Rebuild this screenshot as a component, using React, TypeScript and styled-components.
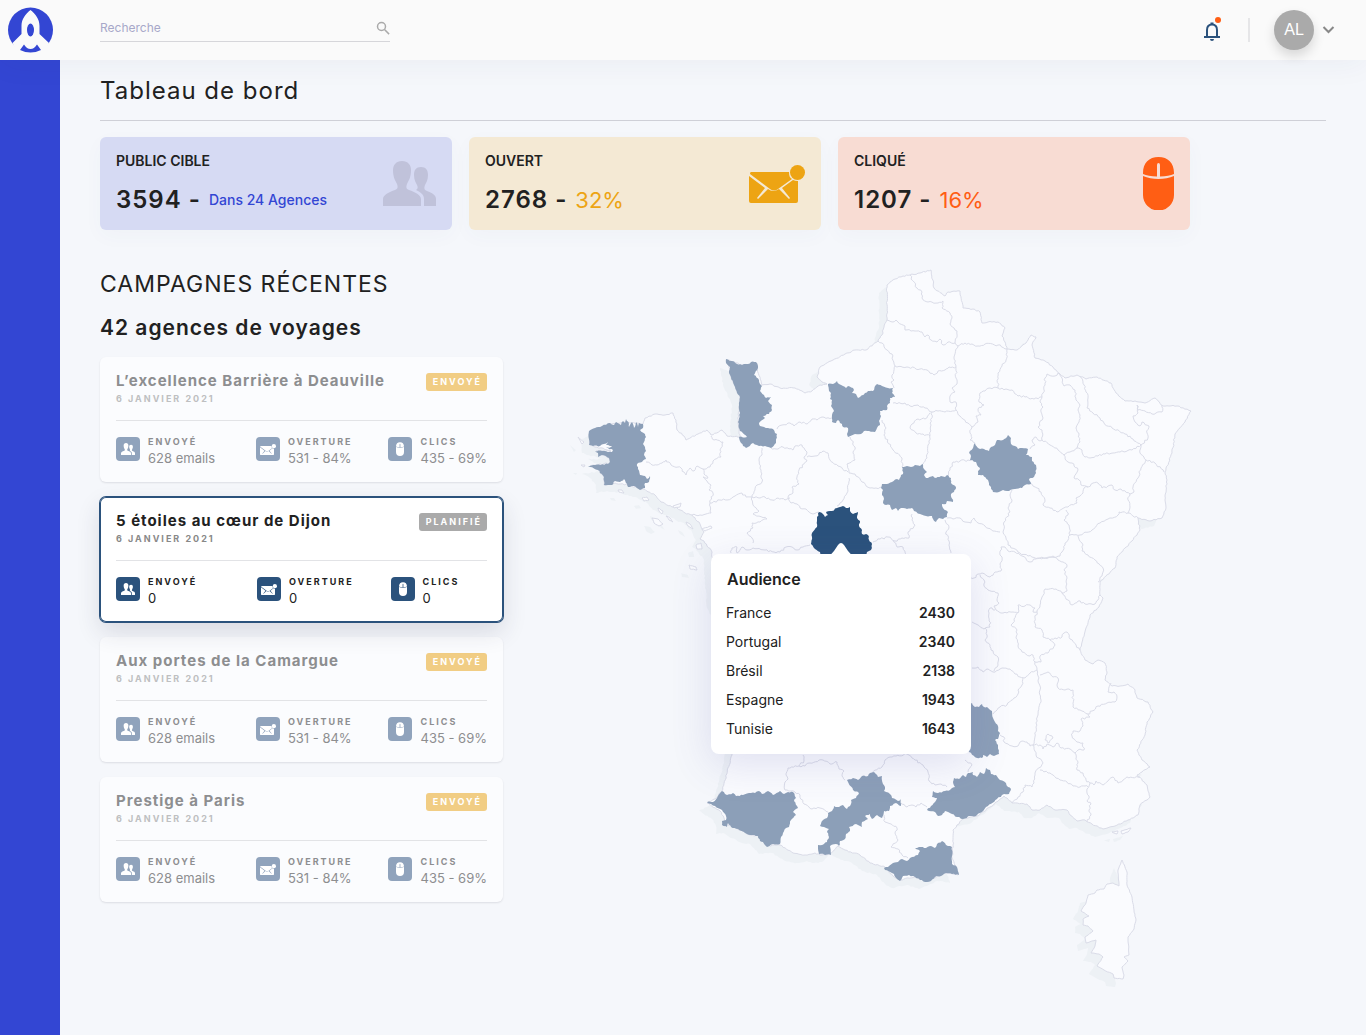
import React from "react";
import styled, { createGlobalStyle } from "styled-components";

const GlobalStyle = createGlobalStyle`
  *, *::before, *::after { box-sizing: border-box; }
  body {
    margin: 0;
    background: #f5f7fb;
    color: #212121;
    font-family: Inter, Roboto, "Liberation Sans", sans-serif;
  }
  h1, h2, h3, p, ul, dl, dd { margin: 0; padding: 0; }
`;

/* ---------- Shell ---------- */

const Shell = styled.div`
  display: grid;
  grid-template-columns: 60px minmax(0, 1fr);
  grid-template-rows: 60px auto;
  min-height: 100vh;
`;

const Header = styled.header`
  grid-column: 1 / -1;
  display: flex;
  align-items: center;
  padding: 0 31px 0 8px;
  background: #fafafa;
  box-shadow: 0 4px 30px rgba(40, 60, 90, 0.05);
  z-index: 1;
`;

const LogoLink = styled.a`
  display: block;
  width: 46px;
  height: 46px;
`;

const Search = styled.label`
  display: flex;
  align-items: center;
  width: 290px;
  height: 28px;
  margin-left: 46px;
  margin-bottom: 4px;
  border-bottom: 1px solid #d6d6da;
`;

const SearchInput = styled.input`
  flex: 1;
  min-width: 0;
  padding: 0;
  border: 0;
  outline: 0;
  background: transparent;
  font: inherit;
  font-size: 12px;
  color: #212121;
  &::placeholder { color: #a7a8c9; opacity: 1; }
`;

const HeaderTools = styled.div`
  display: flex;
  align-items: center;
  margin-left: auto;
`;

const IconButton = styled.button`
  display: flex;
  align-items: center;
  padding: 0;
  border: 0;
  background: none;
  cursor: pointer;
`;

const Separator = styled.span`
  width: 2px;
  height: 24px;
  margin: 0 24px 0 27px;
  background: #e6e6e8;
`;

const Avatar = styled.span`
  display: grid;
  place-items: center;
  width: 40px;
  height: 40px;
  margin-right: 8px;
  border-radius: 50%;
  background: #aaaaaa;
  color: #ffffff;
  font-size: 16px;
  box-shadow: 0 6px 12px rgba(0, 0, 0, 0.14);
`;

const Sidebar = styled.nav`
  background: #3346d3;
`;

const Main = styled.main`
  padding: 0 40px 32px;
`;

const PageTitle = styled.h1`
  padding: 15px 0 13px;
  border-bottom: 1px solid #cfd0d7;
  font-size: 24px;
  line-height: 32px;
  font-weight: 400;
  letter-spacing: 1px;
`;

/* ---------- Key figures ---------- */

const Figures = styled.section`
  display: grid;
  grid-template-columns: repeat(3, minmax(0, 1fr));
  gap: 17px;
  max-width: 1090px;
  margin-top: 16px;
`;

const Figure = styled.article<{ $bg: string }>`
  display: flex;
  align-items: center;
  justify-content: space-between;
  height: 93px;
  padding: 0 16px;
  border-radius: 6px;
  background: ${(p) => p.$bg};
  box-shadow: 0 6px 20px rgba(60, 80, 130, 0.03);
`;

const FigureLabel = styled.h2`
  margin-top: 1px;
  font-size: 14px;
  line-height: 16px;
  font-weight: 600;
`;

const FigureLine = styled.p`
  display: flex;
  align-items: center;
  gap: 8px;
  margin-top: 15px;
  line-height: 32px;
`;

const FigureValue = styled.span`
  font-size: 24px;
  font-weight: 600;
  letter-spacing: 1px;
`;

const FigureNote = styled.span<{ $color: string; $small?: boolean }>`
  color: ${(p) => p.$color};
  font-size: ${(p) => (p.$small ? 14 : 22)}px;
  font-weight: ${(p) => (p.$small ? 500 : 400)};
`;

/* ---------- Campaigns ---------- */

const Content = styled.div`
  display: flex;
  align-items: flex-start;
  justify-content: flex-start;
  gap: 57px;
  padding-top: 30px;
`;

const Campaigns = styled.section`
  flex: 0 0 403px;
  padding-top: 8px;
`;

const SectionTitle = styled.h2`
  font-size: 23px;
  line-height: 32px;
  font-weight: 400;
  letter-spacing: 1px;
`;

const SectionSubtitle = styled.h3`
  margin-top: 12px;
  font-size: 21px;
  line-height: 32px;
  font-weight: 600;
  letter-spacing: 1px;
`;

const CampaignList = styled.ul`
  display: grid;
  gap: 15px;
  margin-top: 13px;
  list-style: none;
`;

const Card = styled.li<{ $active?: boolean }>`
  position: relative;
  z-index: ${(p) => (p.$active ? 1 : 0)};
  height: 125px;
  padding: 16px;
  border-radius: 6px;
  background: ${(p) => (p.$active ? "#ffffff" : "#fbfcfe")};
  box-shadow: ${(p) =>
    p.$active
      ? "inset 0 0 0 1px #2b527c, 0 0 0 1px #2b527c, 0 10px 24px rgba(40, 45, 70, 0.14)"
      : "0 1px 2px rgba(40, 45, 60, 0.12)"};
`;

const CardHead = styled.div`
  display: flex;
  align-items: flex-start;
  justify-content: space-between;
  height: 48px;
  border-bottom: 1px solid #e2e3e6;
`;

const CardTitle = styled.h4<{ $active?: boolean }>`
  margin: 0;
  font-size: 15px;
  line-height: 16px;
  font-weight: 700;
  letter-spacing: 1px;
  color: ${(p) => (p.$active ? "#212121" : "#8d8e90")};
`;

const CardDate = styled.p<{ $active?: boolean }>`
  margin-top: 4px;
  font-size: 9px;
  line-height: 12px;
  font-weight: 700;
  letter-spacing: 2px;
  color: ${(p) => (p.$active ? "#888888" : "#bebfc1")};
`;

const Tag = styled.span<{ $active?: boolean }>`
  padding: 0 5px 0 7px;
  border-radius: 3px;
  background: ${(p) => (p.$active ? "#aaaaaa" : "#f1cd84")};
  color: #ffffff;
  font-size: 9px;
  line-height: 18px;
  font-weight: 700;
  letter-spacing: 2px;
`;

const Stats = styled.dl`
  display: grid;
  grid-template-columns: 38fr 36fr 26fr;
  margin-top: 15px;
`;

const Stat = styled.div<{ $active?: boolean }>`
  display: grid;
  grid-template-columns: 24px auto;
  grid-template-rows: 12px 20px;
  column-gap: 8px;
  white-space: nowrap;
  color: ${(p) => (p.$active ? "#212121" : "#8d8e90")};
`;

const StatIcon = styled.dd<{ $active?: boolean }>`
  grid-row: 1 / 3;
  display: grid;
  place-items: center;
  width: 24px;
  height: 24px;
  margin-top: 1px;
  border-radius: 4px;
  background: ${(p) => (p.$active ? "#2b527c" : "#90a3bc")};
  color: #ffffff;
`;

const StatLabel = styled.dt`
  grid-column: 2;
  grid-row: 1;
  font-size: 9px;
  line-height: 12px;
  font-weight: 700;
  letter-spacing: 2px;
`;

const StatValue = styled.dd`
  grid-column: 2;
  font-size: 13px;
  line-height: 20px;
`;

/* ---------- Map ---------- */

const MapArea = styled.section`
  position: relative;
  flex: 0 0 650px;
  svg.map { display: block; width: 100%; height: auto; }
`;

const Popover = styled.aside`
  position: absolute;
  left: 151px;
  top: 294px;
  width: 260px;
  padding: 13px 16px 11px 15px;
  border-radius: 8px;
  background: #ffffff;
  box-shadow: 0 10px 40px rgba(80, 80, 170, 0.16);
`;

const PopoverArrow = styled.svg`
  position: absolute;
  top: -11px;
  left: 118px;
`;

const AudienceTable = styled.table`
  width: 100%;
  border-collapse: collapse;
  font-size: 14px;
  caption {
    padding-left: 1px;
    margin-bottom: 7px;
    font-size: 16px;
    line-height: 24px;
    font-weight: 600;
    text-align: left;
  }
  th, td { height: 29px; padding: 0; line-height: 18px; }
  th { font-weight: 400; text-align: left; }
  td { font-weight: 600; text-align: right; }
`;

/* ---------- Icons ---------- */

type IconProps = { w: number; h: number };

const PeopleIcon = ({ w, h }: IconProps) => (
  <svg width={w} height={h} viewBox="0 0 53 45" fill="currentColor" aria-hidden="true">
    <path d="M19 0c6 0 9 4 9 9 0 7-2 10-4 14-1 3-1 5 2 6 6 2 12 5 12 9v7H0v-7c0-4 6-7 12-9 3-1 3-3 2-6-2-4-4-7-4-14 0-5 3-9 9-9z" />
    <path d="M38 6c5 0 7 3 7 8 0 5-2 8-3 10-1 3-1 5 2 6 5 2 9 4 9 8v7H41v-7c0-5-4-7-8-9 2-1 2-3 1-5-1-2-3-5-3-10 0-5 2-8 7-8z" />
  </svg>
);

const MailIcon = ({ w, h }: IconProps) => (
  <svg width={w} height={h} viewBox="0 0 56 38" fill="currentColor" aria-hidden="true">
    <path d="M2 7h38c0 4 1 6 3 7L29 24q-4 3-8 0L1 9q0-2 1-2z" />
    <path d="M0 11l16 12-8 10 1 1 10-10q5 4 11 0l10 10 1-1-8-10 11-8q2 1 5 1v20q0 2-2 2H2q-2 0-2-2z" />
    <circle cx="48.500" cy="7.500" r="7.500" />
  </svg>
);

const MouseIcon = ({ w, h }: IconProps) => (
  <svg width={w} height={h} viewBox="0 0 31 53" fill="currentColor" aria-hidden="true">
    <path d="M0 19q7 3 15.500 3T31 19v19a15 15 0 0 1-31 0z" />
    <path d="M0 16C0 6 6 0 15.500 0S31 6 31 16v1q-5 2-14 2.500V8q0-2-1.500-2T14 8v11.500Q5 19 0 17z" />
  </svg>
);

const Logo = () => (
  <svg width="46" height="46" viewBox="0 0 46 46" aria-hidden="true">
    <circle cx="22.500" cy="23" r="22.500" fill="#3346d3" />
    <path d="M22.500 3c5 4 9 9 9 16v8l9.500 9L36 46H9L4.500 36l9-9v-8c0-7 4-12 9-16z" fill="#fafafa" />
    <path d="M12 43l4-5.500c2 3 4 4.500 6.500 4.500s4.500-1.500 6.500-4.500l4 5.500q-10.500 5-21 0z" fill="#3346d3" />
    <ellipse cx="22.500" cy="23" rx="3.500" ry="6.500" fill="#3346d3" />
  </svg>
);

const SearchIcon = () => (
  <svg width="14" height="14" viewBox="0 0 14 14" fill="none" stroke="#aaaaaa" strokeWidth="1.500" aria-hidden="true">
    <circle cx="5.500" cy="5.500" r="4" />
    <path d="M8.500 8.500l4.600 4.600" />
  </svg>
);

const BellIcon = () => (
  <svg width="18" height="26" viewBox="0 0 18 26" fill="none" aria-hidden="true">
    <path d="M4 19.500V13c0-3.500 2-5.500 5-5.500s5 2 5 5.500v6.500" stroke="#2b527c" strokeWidth="2" />
    <path d="M1 19h16v2H1zM7 22h4q0 2-2 2t-2-2zM7.500 5.500h3V8h-3z" fill="#2b527c" />
    <circle cx="15" cy="3" r="3" fill="#ff5e14" />
  </svg>
);

const Chevron = () => (
  <svg width="13" height="8" viewBox="0 0 13 8" fill="none" stroke="#888888" strokeWidth="2" aria-hidden="true">
    <path d="M1.500 1l5 5 5-5" />
  </svg>
);

/* ---------- Geography ---------- */

type Pt = [number, number];

const parse = (s: string): Pt[] =>
  s.trim().split(/\s+/).map((p) => p.split(",").map(Number) as Pt);

const noise = (x: number, y: number) => {
  const v = Math.sin(x * 12.9898 + y * 78.233) * 43758.5453;
  return (v - Math.floor(v)) * 2 - 1;
};

// Cuts each segment into short steps and shifts them sideways, as a surveyed border would run.
const roughen = (pts: Pt[], amount: number): Pt[] => {
  const out: Pt[] = [pts[0]];
  for (let i = 1; i < pts.length; i++) {
    const [ax, ay] = pts[i - 1];
    const [bx, by] = pts[i];
    const length = Math.hypot(bx - ax, by - ay);
    const steps = Math.max(1, Math.round(length / 2));
    for (let j = 1; j < steps; j++) {
      const t = j / steps;
      const x = ax + (bx - ax) * t;
      const y = ay + (by - ay) * t;
      const k = (noise(x, y) * amount) / length;
      out.push([x - (by - ay) * k, y + (bx - ax) * k]);
    }
    out.push(pts[i]);
  }
  return out;
};

const toPath = (s: string, closed: boolean, amount = 0.6) => {
  const pts = parse(s);
  if (closed) pts.push(pts[0]);
  const d = roughen(pts, amount)
    .map(([x, y]) => `${x.toFixed(1)},${y.toFixed(1)}`)
    .join("L");
  return `M${d}${closed ? "Z" : ""}`;
};

const mainland = `931,270 934,288 945,296 948,292 960,291 963,308 973,309 980,312 982,323 988,322 998,322 1005,328 1002,336
1005,342 1007,349 1017,350 1026,343 1031,335 1036,337 1032,345 1035,358 1045,361 1053,367 1060,374 1065,378 1077,375 1086,379
1097,377 1111,383 1116,393 1125,401 1135,401 1145,403 1155,398 1163,406 1177,406 1191,411 1185,422 1175,434 1172,453 1165,472
1167,480 1165,500 1166,508 1162,518 1150,521 1138,518 1140,530 1132,541 1117,557 1115,568 1100,582 1100,595 1103,598 1099,607
1090,615 1086,628 1080,650 1085,660 1093,664 1098,660 1105,663 1107,672 1105,680 1112,686 1120,686 1128,684 1135,690 1137,698
1148,702 1153,712 1147,722 1145,735 1137,750 1142,760 1150,767 1142,772 1137,775 1147,785 1150,797 1140,805 1138,815 1128,820
1115,826 1103,829 1092,824 1085,820 1077,821 1070,815 1067,810 1055,810 1047,805 1040,810 1032,810 1027,804 1012,803 1007,798
1004,796 990,807 977,816 963,819 953,830 953,845 952,858 958,875 945,873 935,878 927,881 915,877 900,880 893,876 885,867
870,863 860,855 845,850 838,846 830,854 820,855 815,853 805,855 793,853 780,845 767,846 758,836 747,834 731,825 724,826
724,818 720,811 707,803 715,799 722,791 732,755 738,700 735,640 715,600 712,560 712,552 704,541 700,539 704,532 700,524
692,515 685,513 677,508 680,505 672,507 661,502 655,495 643,489 628,485 615,483 604,485 604,477 598,470 590,466 610,463
609,458 602,455 596,451 611,451 593,446 590,445 590,431 610,424 626,422 643,424 645,418 655,414 665,415 673,413 676,420
677,430 684,436 686,440 698,434 707,430 711,435 722,430 727,436 740,437 738,422 740,397 731,377 728,360 742,365 755,364
762,385 770,384 780,388 795,388 805,393 812,391 820,385 827,384 822,382 817,377 820,367 833,360 845,354 855,350 866,350
878,341 882,335 884,327 887,320 887,285 895,279 903,276 910,275 920,273`;

const corsica = `1122,860 1127,872 1127,885 1132,897 1134,910 1136,920 1134,929 1128,937 1129,955 1124,957 1128,961 1122,967
1124,975 1123,979 1114,978 1113,974 1104,970 1097,966 1103,957 1099,954 1091,953 1095,946 1096,940 1086,943 1085,937 1093,931
1088,926 1083,925 1083,919 1089,916 1081,911 1086,903 1088,895 1095,893 1097,890 1104,889 1107,884 1113,883 1119,886 1118,870`;

const islands = [
  "652,518 658,519 663,524 659,526 654,523",
  "618,490 622,490 624,493 619,492",
  "642,498 647,497 649,500 644,501",
  "658,508 663,511 662,514 659,511",
  "666,516 670,518 673,522 669,520",
  "673,506 681,503 680,507 674,508",
  "686,522 690,524 693,529 688,526",
  "702,529 711,526 712,528 705,531",
  "696,545 701,543 702,549 697,549",
  "689,565 696,567 697,570 690,569",
  "578,437 584,442 582,444",
  "581,465 585,465 584,467",
  "1112,832 1118,831 1117,834",
  "1121,831 1131,828 1128,832 1122,834",
];

const borders = [
  "910,275 917,288 922,292 922,298 928,302 938,303 943,301 942,308 950,313 952,318 950,324 955,330 957,331 955,343",
  "887,320 893,322 896,320 898,322 905,326 905,330 915,331 922,332 925,337 928,335 931,340 937,342 940,339 943,345 948,342 955,343",
  "955,343 958,346 965,343 972,344 978,346 985,344 998,345 1007,349",
  "878,341 882,343 887,350 892,354 895,366 892,375 894,380 891,382 894,388",
  "895,366 907,367 920,369 927,370 934,375 938,371 945,370 949,367 956,367",
  "958,346 954,357 956,367 956,378 957,384 952,388 955,392 950,396 950,402 956,402 956,410",
  "893,403 905,403 910,406 918,405 925,408 932,412 938,411 945,412 956,410 960,416 968,423 972,427",
  "1007,349 1006,360 1002,366 998,373 998,388 990,388 985,391 980,393 979,402 984,405 978,409 981,415 976,416 978,422 972,427 970,433 972,438 970,440 975,443",
  "998,388 1006,389 1012,390 1018,396 1025,397 1034,399 1042,397",
  "1042,397 1045,385 1045,378 1047,374 1055,376 1058,373 1062,378",
  "1042,397 1040,402 1043,407 1041,412 1043,418 1038,427 1042,430 1042,440 1038,440 1036,437 1032,440 1035,445 1030,449",
  "1062,378 1064,386 1070,385 1075,390 1076,400 1080,405 1078,410 1080,415 1079,422 1076,428 1079,435 1080,442 1077,448 1072,451 1064,455 1058,450 1050,445 1042,440",
  "1080,376 1084,385 1086,392 1088,398 1087,408 1093,413 1100,418 1104,423 1112,428 1125,434 1133,439 1141,445",
  "1077,448 1082,450 1085,457 1090,458 1098,456 1105,454 1113,453 1120,452 1132,450 1141,445",
  "1162,405 1162,412 1152,414 1145,411 1138,410 1137,405 1138,413 1133,416 1134,420 1140,426 1142,422 1149,426 1147,433 1148,438 1141,445 1140,453 1146,460 1155,463 1164,472",
  "1146,460 1141,468 1138,478 1133,487 1134,492 1130,494 1128,500 1130,507 1128,513 1138,518",
  "1064,455 1068,462 1072,463 1078,470 1074,478 1079,480 1081,485 1088,487 1093,483 1098,483 1102,488 1108,486 1112,485 1115,490 1121,489 1130,494",
  "1030,483 1037,488 1041,492 1045,500 1043,505 1050,508 1057,512 1062,509 1068,507 1077,503 1076,498 1083,493 1084,488 1088,487",
  "1066,510 1068,515 1064,520 1069,525 1070,535 1080,535 1092,530 1100,523 1108,519 1118,515 1119,512 1128,513",
  "1078,536 1083,545 1082,551 1088,555 1095,560 1103,568 1102,576 1098,582",
  "1070,535 1065,545 1062,552 1060,556 1050,557 1040,558 1028,556 1018,552 1008,545 1006,538 1003,532 1004,522 1010,512 1008,508 1012,500 1010,495 1012,490",
  "947,518 953,519 960,518 965,522 971,523 974,518 978,523 985,526 993,531 1000,532",
  "945,520 949,527 946,532 949,541 951,553",
  "912,514 912,520 915,525 908,532 909,538 902,538 895,541 888,537 880,539 873,542",
  "893,540 897,547 903,547 907,555",
  "972,460 960,461 953,462 950,470 948,476",
  "932,412 931,425 930,435 928,445 927,458 923,464",
  "930,413 925,419 918,419 912,424 910,428 916,433 923,434 930,436",
  "882,420 886,428 884,435 893,450 902,458 902,467",
  "850,437 855,447 853,453 855,460 847,464 849,473 855,474 862,482 870,488 876,488 882,487",
  "849,478 847,493 843,500 837,506",
  "777,429 782,425 790,423 794,426 800,422 807,424 812,419 817,420 822,417 832,418",
  "771,448 776,449 783,447 793,450 795,446 802,445 805,450 807,452 804,457 807,461 799,470 797,477 799,484 792,487 793,493 788,497 791,503 797,504 800,508 806,509 813,514 819,512",
  "807,457 815,456 823,451 828,453 830,460 838,466 848,472",
  "762,448 762,455 759,460 761,472 762,482 757,485 752,497 760,498 765,497 772,500 778,498 785,500 790,498",
  "710,503 720,500 727,500 735,496 742,493 746,497 752,497 753,505 759,511 753,514 767,519 760,522 752,523 753,528 747,533 752,538 753,543",
  "711,436 714,440 723,442 720,450 721,457 713,461 710,467 703,469",
  "646,462 652,465 657,465 662,463 666,460 671,465 678,467 681,468 684,472 686,475 690,468 694,471 697,466 703,469 704,474 708,478 703,477 711,485 709,490 713,493 710,503 711,513 706,514 700,515 692,515",
  "731,553 732,548 737,547 737,553 742,547 748,550 753,548 765,550 774,552 780,552 786,547 792,547 797,550 803,547 810,545",
  "968,577 974,578 978,574 982,573 990,577 995,572 1001,571 1000,564 1002,557 1000,555 1001,547 1005,547 1008,551 1015,552 1022,556 1030,562 1036,559 1045,558 1053,556 1058,560 1063,562 1067,565 1064,570 1067,578 1066,588 1067,591 1062,593 1056,589 1045,589 1042,597 1040,605 1037,612",
  "1062,593 1068,600 1072,605 1078,601 1085,604 1095,604 1098,600 1100,595",
  "1037,612 1035,618 1035,627 1042,630 1043,637 1050,640 1055,638 1062,637 1064,633 1067,632 1070,639 1080,650",
  "980,575 984,580 984,586 988,590 998,593 997,600 999,603 994,606 996,610 1003,613 1013,612 1018,613 1018,605 1025,606 1030,605 1035,608 1033,612 1037,612",
  "995,610 990,608 989,613 990,627 984,629 978,625 972,622",
  "985,628 987,635 985,640 990,645 991,650 998,657 998,665 994,671",
  "972,668 978,667 983,672 988,669 993,672 1000,669 1010,669 1015,674 1020,677 1025,678 1030,673 1037,670",
  "1018,612 1013,623 1011,625 1017,630 1016,638 1018,646 1022,652 1030,656 1033,655 1035,662 1041,662 1040,656 1048,653 1055,645 1050,640",
  "1035,662 1037,670 1040,690 1041,700 1038,715 1036,727 1033,745 1036,755 1043,763 1035,773 1034,783 1032,787 1025,785 1023,792 1018,797 1012,803",
  "1040,675 1048,672 1053,677 1058,678 1058,688 1065,690 1073,690 1073,707 1080,710 1088,714 1092,711 1098,706 1107,703 1115,702 1117,697 1114,692 1108,692 1111,683",
  "1088,714 1090,717 1081,719 1083,726 1080,731 1073,731 1072,736 1077,742 1083,743 1084,750 1078,750 1075,753 1078,763 1077,770 1083,773 1086,780 1090,783",
  "1023,678 1022,685 1018,690 1018,694 1007,705 1000,707 993,714",
  "1000,735 1004,737 1004,742 1012,746 1018,746 1022,741 1027,742 1030,746 1033,745 1040,745 1043,749 1047,744 1053,747 1057,743 1061,748 1070,749 1075,753",
  "1045,740 1048,734 1053,738 1049,743 1045,740",
  "1040,770 1048,773 1053,775 1060,780 1067,782 1073,786 1080,787 1085,786 1088,787",
  "1090,783 1094,785 1096,781 1103,785 1108,781 1113,777 1118,783 1123,780 1127,777 1140,777",
  "1090,783 1087,789 1087,793 1089,796 1087,801 1091,804 1089,810 1091,815 1087,822",
  "803,755 804,761 799,766 788,768 786,775 788,779 785,782 785,790 795,792 800,795 804,804 812,809 820,808 828,812",
  "799,766 805,766 810,763 823,760 830,764 837,762 839,769 844,771 842,776 845,780",
  "872,773 882,767 885,760 890,757 896,756 907,754 912,758 923,765 928,772 929,781 935,785 941,784 947,787",
  "965,760 972,765 968,772",
  "901,803 907,807 912,805 916,807 921,803 927,807",
  "884,815 885,822 891,824 897,828 895,833 898,840 891,847 898,849 902,855 908,858",
];

const departments = [
  // Finistère
  `589,431 595,428 602,426 610,423 614,425 616,422 621,425 623,421 625,423 626,419 629,424 629,427 632,422 634,428 636,422
   638,427 639,423 643,424 643,428 640,430 645,434 646,437 643,444 645,447 646,451 644,455 646,459 642,462 637,464 638,469
   640,475 645,476 647,479 650,476 649,482 645,483 645,488 640,490 634,486 628,487 627,484 624,479 620,482 615,481 612,485
   604,485 604,477 598,470 588,466 595,465 608,464 610,462 609,458 602,455 598,457 598,453 595,451 602,451 612,452 613,450
   606,448 611,447 612,446 606,445 608,442 600,446 593,446 589,445`,
  // Manche
  `726,359 732,361 737,364 742,365 748,364 751,362 756,362 758,366 757,370 754,375 759,380 760,384 762,386 760,391 764,395
   766,398 771,397 768,401 772,405 772,410 769,414 763,416 765,418 759,423 760,426 764,427 768,428 773,429 775,433 777,434
   776,443 771,448 765,446 759,446 753,443 746,448 741,443 739,437 747,437 740,431 738,422 740,413 739,405 740,397 737,393
   735,387 731,377 729,373 730,367 726,363`,
  // Eure
  `828,384 833,384 837,381 839,384 843,386 846,388 848,386 853,388 854,390 852,393 856,394 858,398 860,397 865,393 868,391
   873,391 875,386 877,384 882,386 888,388 893,388 892,393 895,397 890,398 890,403 887,406 887,410 880,411 881,416 879,421
   880,425 877,428 875,432 869,431 864,431 861,434 855,434 848,437 847,434 848,428 843,427 842,424 840,423 838,420 836,423 832,422
   832,415 834,411 831,406 832,400 830,399 831,393 829,391`,
  // Loiret
  `902,467 907,466 911,467 915,465 920,466 923,464 924,469 927,472 924,475 926,478 933,476 936,478 941,476 945,477 947,475
   951,478 951,483 956,487 954,492 951,494 953,502 947,501 946,504 942,504 943,508 948,512 947,517 943,519 939,518 936,522
   933,519 932,516 926,516 920,514 914,511 912,508 907,509 901,508 898,511 896,508 892,510 890,505 886,505 883,503 884,499
   882,495 883,490 881,488 882,484 887,484 892,482 897,479 899,480 901,475 903,474`,
  // Aube
  `975,443 978,448 980,449 984,449 989,451 991,447 995,445 997,440 1003,440 1007,437 1008,435 1011,438 1011,444 1015,446
   1018,449 1022,448 1028,449 1026,455 1032,457 1032,461 1036,465 1036,473 1034,477 1029,479 1031,484 1025,485 1022,488
   1015,489 1009,491 1003,490 999,492 993,492 991,487 989,485 988,480 983,475 978,475 978,471 980,468 977,465 976,462 970,460
   971,456 969,453 973,448`,
  // Ardèche
  `972,703 975,707 979,707 982,704 984,707 987,707 992,711 993,718 995,722 998,726 998,731 1000,733 998,739 995,740 998,745
   999,754 994,756 990,754 987,757 983,755 982,758 977,758 969,752 960,745 960,710`,
  // Hérault
  `927,810 931,806 935,802 937,798 932,797 933,791 938,793 945,791 950,790 955,787 953,782 954,778 959,779 963,775 966,777
   968,773 973,772 973,775 977,777 980,772 984,774 986,768 990,770 991,774 996,775 1000,780 1006,783 1008,787 1011,789
   1009,794 1004,794 997,799 988,806 980,813 976,816 970,816 963,819 957,817 952,814 945,811 942,815 938,816 935,812`,
  // Haute-Garonne
  `847,780 853,778 858,780 862,776 868,776 870,773 874,772 878,777 882,776 883,784 885,787 884,791 890,794 892,798 898,801
   901,799 901,806 896,803 890,806 889,811 884,811 882,818 877,815 872,819 870,814 865,816 868,819 862,822 862,827 856,824
   849,827 850,831 846,834 845,839 840,841 839,846 836,844 830,846 831,855 819,854 818,845 824,844 827,842 829,837 827,832
   829,829 824,827 820,826 823,820 827,818 828,813 832,811 834,806 839,807 843,805 847,809 851,804 851,800 856,798 859,793 853,790`,
  // Pyrénées-Atlantiques
  `707,802 713,802 717,798 722,791 727,795 733,793 736,796 743,795 749,793 755,793 759,791 762,794 768,791 773,795 780,791
   784,794 788,792 793,792 796,798 794,801 798,808 793,812 796,815 791,820 789,827 786,828 783,833 781,837 780,844 773,844
   767,847 763,842 760,841 758,836 752,835 747,834 738,829 731,827 728,823 727,827 722,825 722,821 726,820 726,816 722,810 715,806`,
  // Pyrénées-Orientales
  `884,868 888,867 893,863 898,862 902,859 907,861 912,857 918,855 920,851 915,848 921,847 926,848 930,846 935,848 937,844
   942,841 946,845 952,847 952,864 957,867 959,875 952,874 946,873 941,876 935,877 931,881 927,882 920,880 915,877 909,875
   903,876 900,881 897,879 894,874 890,872 885,870`,
];

const indre = `819,512 823,514 825,517 828,515 826,512 832,511 837,508 843,506 846,508 850,507 850,511 853,514 858,512
857,518 860,521 859,526 862,530 862,534 868,535 869,540 872,544 871,550 867,552 865,560 822,560 820,552 815,549 811,544
812,537 812,533 817,527 817,519`;

const FranceMap = () => (
  <svg className="map" viewBox="560 260 650 740" role="img" aria-label="Carte de France">
    <g fill="#edf1f5" transform="translate(-8 8)">
      <path d={toPath(mainland, true)} />
      <path d={toPath(corsica, true, 0.3)} />
      {islands.map((s) => <path key={s} d={toPath(s, true, 0.3)} />)}
    </g>
    <g fill="#fafbfe" stroke="#dadce8" strokeLinejoin="round">
      <path d={toPath(mainland, true)} />
      <path d={toPath(corsica, true, 0.3)} />
      {islands.map((s) => <path key={s} d={toPath(s, true, 0.3)} />)}
    </g>
    <g fill="none" stroke="#dadce8" strokeLinejoin="round">
      {borders.map((s) => <path key={s} d={toPath(s, false, 1)} />)}
    </g>
    <g fill="#8c9fb8">
      {departments.map((s) => <path key={s} d={toPath(s, true)} />)}
    </g>
    <path fill="#2b527c" d={toPath(indre, true)} />
  </svg>
);

/* ---------- Data ---------- */

const campaigns = [
  { title: "L’excellence Barrière à Deauville", values: ["628 emails", "531 - 84%", "435 - 69%"] },
  { title: "5 étoiles au cœur de Dijon", values: ["0", "0", "0"], active: true },
  { title: "Aux portes de la Camargue", values: ["628 emails", "531 - 84%", "435 - 69%"] },
  { title: "Prestige à Paris", values: ["628 emails", "531 - 84%", "435 - 69%"] },
];

const statKinds = [
  { label: "ENVOYÉ", icon: <PeopleIcon w={14} h={12} /> },
  { label: "OVERTURE", icon: <MailIcon w={16} h={11} /> },
  { label: "CLICS", icon: <MouseIcon w={8} h={14} /> },
];

const audience = [
  ["France", 2430],
  ["Portugal", 2340],
  ["Brésil", 2138],
  ["Espagne", 1943],
  ["Tunisie", 1643],
];

const Tint = styled.span<{ $color: string }>`
  display: flex;
  color: ${(p) => p.$color};
`;

export default function App() {
  return (
    <>
      <GlobalStyle />
      <Shell>
        <Header>
          <LogoLink href="#" aria-label="Accueil"><Logo /></LogoLink>
          <Search>
            <SearchInput type="text" placeholder="Recherche" aria-label="Recherche" />
            <SearchIcon />
          </Search>
          <HeaderTools>
            <IconButton aria-label="Notifications"><BellIcon /></IconButton>
            <Separator />
            <IconButton aria-label="Compte">
              <Avatar>AL</Avatar>
              <Chevron />
            </IconButton>
          </HeaderTools>
        </Header>
        <Sidebar aria-label="Navigation" />
        <Main>
          <PageTitle>Tableau de bord</PageTitle>
          <Figures>
            <Figure $bg="#d6daf3">
              <div>
                <FigureLabel>PUBLIC CIBLE</FigureLabel>
                <FigureLine>
                  <FigureValue>3594 -</FigureValue>
                  <FigureNote $color="#3346d3" $small>Dans 24 Agences</FigureNote>
                </FigureLine>
              </div>
              <Tint $color="#c0c2da"><PeopleIcon w={53} h={45} /></Tint>
            </Figure>
            <Figure $bg="#f4e9d4">
              <div>
                <FigureLabel>OUVERT</FigureLabel>
                <FigureLine>
                  <FigureValue>2768 -</FigureValue>
                  <FigureNote $color="#eda413">32%</FigureNote>
                </FigureLine>
              </div>
              <Tint $color="#eda413"><MailIcon w={56} h={38} /></Tint>
            </Figure>
            <Figure $bg="#f8dcd3">
              <div>
                <FigureLabel>CLIQUÉ</FigureLabel>
                <FigureLine>
                  <FigureValue>1207 -</FigureValue>
                  <FigureNote $color="#ff5e14">16%</FigureNote>
                </FigureLine>
              </div>
              <Tint $color="#ff5e14"><MouseIcon w={31} h={53} /></Tint>
            </Figure>
          </Figures>
          <Content>
            <Campaigns>
              <SectionTitle>CAMPAGNES RÉCENTES</SectionTitle>
              <SectionSubtitle>42 agences de voyages</SectionSubtitle>
              <CampaignList>
                {campaigns.map((c) => (
                  <Card key={c.title} $active={c.active}>
                    <CardHead>
                      <div>
                        <CardTitle $active={c.active}>{c.title}</CardTitle>
                        <CardDate $active={c.active}>6 JANVIER 2021</CardDate>
                      </div>
                      <Tag $active={c.active}>{c.active ? "PLANIFIÉ" : "ENVOYÉ"}</Tag>
                    </CardHead>
                    <Stats>
                      {statKinds.map((k, i) => (
                        <Stat key={k.label} $active={c.active}>
                          <StatLabel>{k.label}</StatLabel>
                          <StatIcon $active={c.active}>{k.icon}</StatIcon>
                          <StatValue>{c.values[i]}</StatValue>
                        </Stat>
                      ))}
                    </Stats>
                  </Card>
                ))}
              </CampaignList>
            </Campaigns>
            <MapArea>
              <FranceMap />
              <Popover>
                <PopoverArrow width="24" height="12" viewBox="0 0 24 12" aria-hidden="true">
                  <path d="M0 12q3-1 5-4l4-6q3-4 6 0l4 6q2 3 5 4z" fill="#ffffff" />
                </PopoverArrow>
                <AudienceTable>
                  <caption>Audience</caption>
                  <tbody>
                    {audience.map(([name, count]) => (
                      <tr key={name}>
                        <th scope="row">{name}</th>
                        <td>{count}</td>
                      </tr>
                    ))}
                  </tbody>
                </AudienceTable>
              </Popover>
            </MapArea>
          </Content>
        </Main>
      </Shell>
    </>
  );
}
